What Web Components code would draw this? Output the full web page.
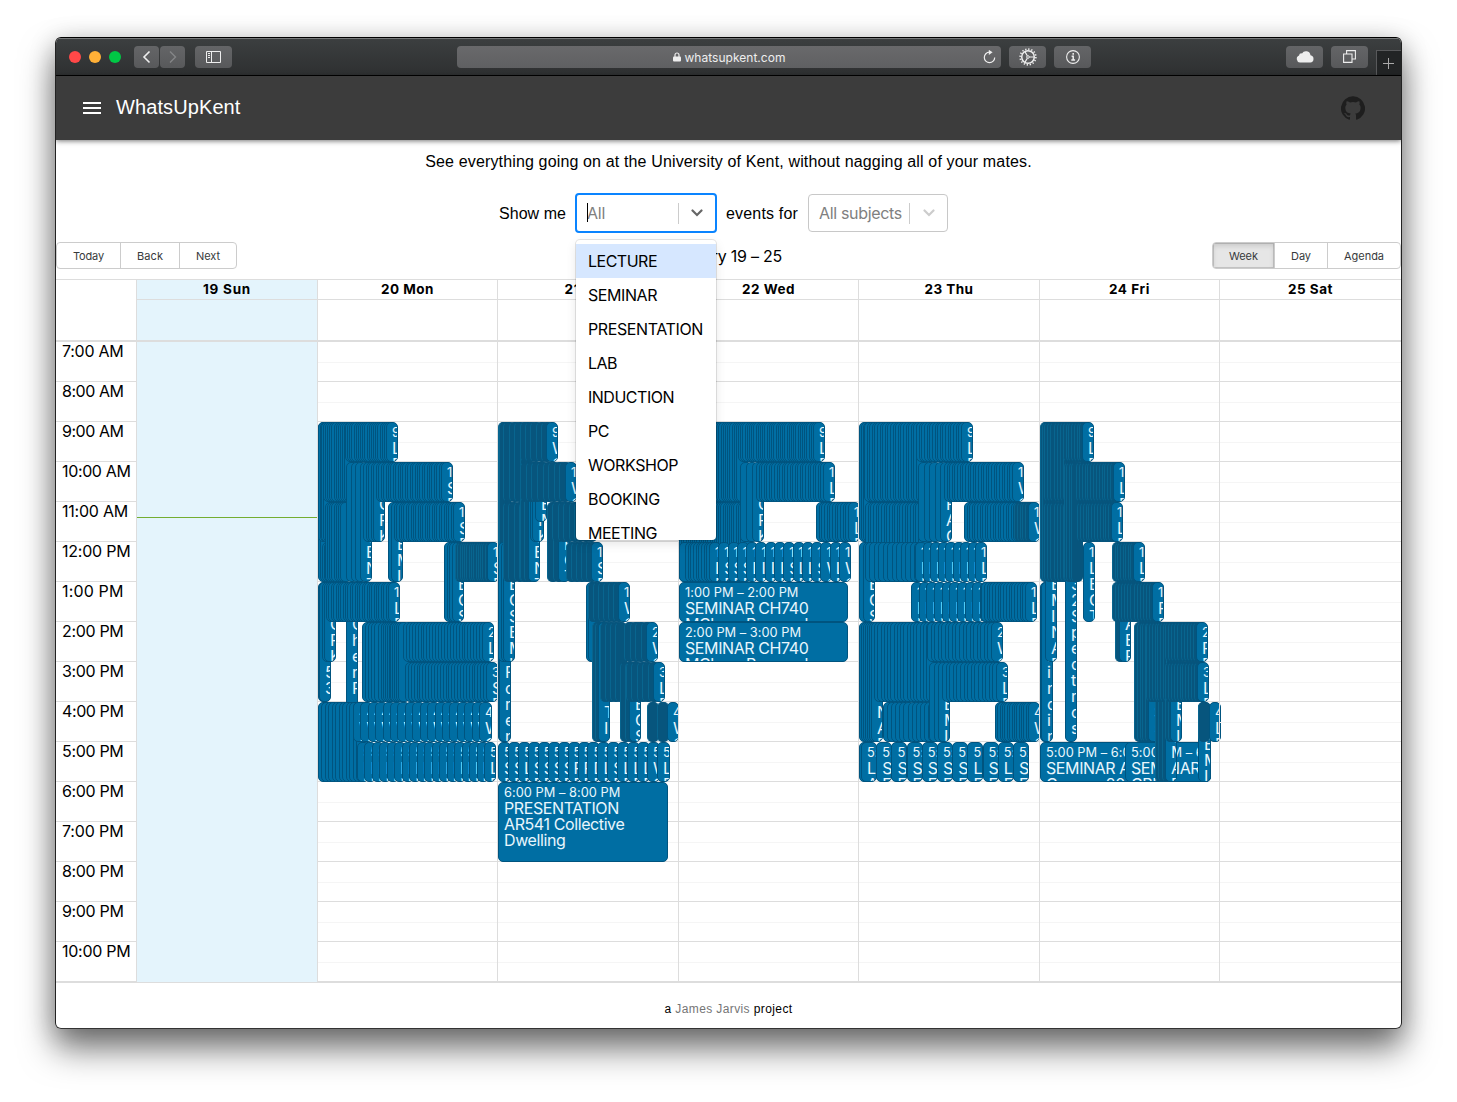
<!DOCTYPE html>
<html lang="en">
<head>
<meta charset="utf-8">
<title>WhatsUpKent</title>
<style>
html,body{margin:0;height:100%;background:#fff;overflow:hidden}
body{font-family:Inter,"Liberation Sans",sans-serif;font-size:16px;color:#000}
</style>
</head>
<body>
<browser-window>
  <browser-toolbar slot="chrome"></browser-toolbar>
  <app-bar></app-bar>
  <filter-panel></filter-panel>
  <week-calendar></week-calendar>
  <page-footer></page-footer>
</browser-window>
<script>
const define = (name, html, setup) => customElements.define(name, class extends HTMLElement {
  connectedCallback() {
    if (this.shadowRoot) return;
    this.attachShadow({ mode: 'open' }).innerHTML = html;
    if (setup) setup(this, this.shadowRoot);
  }
});

define('browser-window', `<style>
:host{display:block;box-sizing:border-box;width:1457px;height:1102px;padding:37px 55px 73px 55px;overflow:hidden}
.win{box-sizing:border-box;width:1347px;height:992px;border:1px solid #000;border-color:#000 #222 #333;border-radius:6px;background:#fff;display:flex;flex-direction:column;overflow:hidden}
.shade{width:1347px;border-radius:6px;box-shadow:0 20px 34px rgba(0,0,0,.52),0 4px 26px rgba(0,0,0,.22)}
</style><div class="shade"><div class="win"><slot name="chrome"></slot><slot></slot></div></div>`);

define('tool-button', `<style>
:host{display:flex;align-items:center;justify-content:center;box-sizing:border-box;height:22px;width:37px;border-radius:4px;background:linear-gradient(#646567,#58595b);color:#eee;flex:none}
</style><slot></slot>`);

define('browser-toolbar', `<style>
:host{display:flex;flex:none;box-sizing:border-box;height:38px;border-bottom:1px solid #000;background:linear-gradient(#3c3f40,#2e3031);box-shadow:inset 0 1px #77797a;align-items:center;padding-left:13px;font:12px Inter,sans-serif;color:#eee}
i{width:12px;height:12px;border-radius:50%;margin-right:8px}
.nav{width:25px;margin-right:1px}
.url{width:544px;height:22px;margin-left:225px;border-radius:4px;background:linear-gradient(#69696b,#5f6062);display:flex;align-items:center;justify-content:flex-end;gap:3px;box-sizing:border-box;padding-right:5px}
.addr{flex:1;display:flex;justify-content:center;align-items:center;gap:4px;padding:1px 0 0 22px}
.plus{margin-left:8px;width:25px;height:25px;box-sizing:border-box;border:solid #58595b;border-width:1px 0 0 1px;background:#222425;align-self:flex-end;display:flex;align-items:center;justify-content:center}
svg{display:block;fill:none;stroke:currentColor}
</style>
<i style="background:#ff4848"></i><i style="background:#ffb037"></i><i style="background:#00c845;margin-right:13px"></i>
<tool-button class="nav"><svg width="9" height="14" viewBox="0 0 9 14" stroke-width="1.6"><path d="M7.500 1.500L2 7L7.500 12.500"/></svg></tool-button>
<tool-button class="nav" style="color:#858688"><svg width="9" height="14" viewBox="0 0 9 14" stroke-width="1.4"><path d="M2 1.500L7.500 7L2 12.500"/></svg></tool-button>
<tool-button style="margin-left:9px"><svg width="15" height="12" viewBox="0 0 15 12"><path d="M.5.5h14v11H.5zM5.500.5v11M2 2.500h2M2 4.500h2M2 6.500h2"/></svg></tool-button>
<div class="url"><div class="addr"><svg width="8" height="10" viewBox="0 0 8 10"><path d="M2 5V3a2 2 0 014 0v2" stroke-width="1.2"/><rect y="4.400" width="8" height="5.200" rx="1" fill="currentColor" stroke="none"/></svg><fit-text w="101">whatsupkent.com</fit-text></div>
<svg width="14" height="14" viewBox="0 0 14 14" stroke-width="1.2"><path d="M8.500 2.200H7.500a5.200 5.200 0 105.200 5.200"/><path d="M6.800-.2L10.600 2.300L6.800 5z" fill="currentColor" stroke="none"/></svg></div>
<tool-button style="margin-left:8px"><svg width="18" height="18" viewBox="-9 -9 18 18"><circle r="6.300" stroke-width="1.500"/><circle r="7.900" stroke-width="1.600" stroke-dasharray="1.300 1.800"/><circle r="1.300" stroke-width="1"/><path d="M1.300 0H6M-.7 1.200L-3.100 5.400M-.7-1.200L-3.100-5.400" stroke-width="1.200"/></svg></tool-button>
<tool-button style="margin-left:8px"><svg width="14" height="14" viewBox="0 0 14 14"><circle cx="7" cy="7" r="6.400" stroke-width="1.100"/><path d="M7.200 3v1.800M5.600 6.300h1.600v3.800M5.300 10.100h3.800" stroke-width="1.500"/></svg></tool-button>
<tool-button style="margin-left:195px"><svg width="18" height="13" viewBox="0 0 18 13"><path d="M4 12.500A3.600 3.600 0 013 5.600A2.600 2.600 0 016 3.400A4.600 4.600 0 0114.500 5.200A3.700 3.700 0 0114.300 12.500z" fill="currentColor" stroke="none"/></svg></tool-button>
<tool-button style="margin-left:8px"><svg width="13" height="13" viewBox="0 0 13 13" stroke-width="1.1"><path d="M.6 4h8.400v8.400H.6zM3.600 4V.6h8.800v8.400H9"/></svg></tool-button>
<div class="plus"><svg width="11" height="11" viewBox="0 0 11 11" style="color:#aaa;margin-right:1px"><path d="M0 5.500h11M5.500 0v11"/></svg></div>`);

define('app-bar', `<style>
:host{display:flex;flex:none;align-items:center;box-sizing:border-box;height:64px;background:#3c3c3c;color:#fff;padding:0 36px 0 27px;box-shadow:0 1px 5px rgba(0,0,0,.55);position:relative;font:20px "Liberation Sans",Arial,sans-serif}
svg{display:block}.title{flex:1;padding:0 0 2px 15px}
.gh{fill:#1e1e1e}
</style>
<svg width="18" height="12" viewBox="0 0 18 12"><path d="M0 0h18v2H0zM0 5h18v2H0zM0 10h18v2H0z" fill="#fff"/></svg>
<div class="title"><fit-text w="124.500">WhatsUpKent</fit-text></div>
<svg class="gh" width="24" height="24" viewBox="0 0 24 24"><path d="M12 .3a12 12 0 0 0-3.800 23.400c.6.100.8-.3.8-.6v-2c-3.300.7-4-1.600-4-1.600-.6-1.400-1.400-1.800-1.400-1.800-1-.7.100-.7.100-.7 1.200 0 1.900 1.200 1.900 1.200 1 1.800 2.800 1.300 3.500 1 0-.8.400-1.300.7-1.600-2.700-.3-5.500-1.300-5.500-6 0-1.200.5-2.300 1.300-3.100-.2-.4-.6-1.600 0-3.200 0 0 1-.3 3.400 1.200a11.500 11.500 0 0 1 6 0c2.300-1.500 3.300-1.200 3.300-1.200.6 1.600.2 2.800 0 3.200.9.800 1.300 1.900 1.300 3.200 0 4.600-2.800 5.600-5.500 5.900.5.400.9 1 .9 2.200v3.300c0 .3.100.7.800.6A12 12 0 0 0 12 .3"/></svg>`);

define('select-box', `<style>
:host{display:flex;align-items:center;box-sizing:border-box;width:140px;height:38px;border:1px solid #c8c8c8;border-radius:4px;color:#808080;position:relative;font-family:Inter,sans-serif;background:#fff}
:host([open]){width:142px;height:40px;border:2px solid #0a84ff;}
.v{flex:1;padding-left:10px;white-space:nowrap}
.caret{position:absolute;left:10px;top:8px;height:19px;width:1px;background:#000}
.sep{width:1px;height:21px;background:#ccc}
.c{width:37px;display:flex;justify-content:center;color:#ccc}
:host([open]) .c{width:36px;color:#666}
svg{fill:none;stroke:currentColor;stroke-width:2.200;stroke-linecap:round}
.caret{display:none}:host([open]) .caret{display:block}
</style><div class="v"><slot></slot></div><div class="caret"></div><div class="sep"></div><div class="c"><svg width="12" height="8" viewBox="0 0 12 8"><path d="M1.500 1.500l4.500 4.500 4.500-4.500"/></svg></div><slot name="menu"></slot>`);

define('option-menu', `<style>
:host{position:absolute;left:-1px;top:45px;z-index:20;width:140px;height:300px;box-sizing:border-box;padding-top:4px;background:#fff;border-radius:4px;box-shadow:0 0 0 1px rgba(0,0,0,.1),0 4px 11px rgba(0,0,0,.1);overflow:hidden;color:#000}
</style><slot></slot>`);

define('menu-option', `<style>
:host{display:flex;align-items:center;height:34px;padding-left:12px;white-space:nowrap}
:host([active]){background:#d6e7ff}
</style><slot></slot>`);

define('filter-panel', `<style>
:host{display:flex;flex-direction:column;align-items:center;flex:none;height:102px;font-family:"Liberation Sans",Arial,sans-serif}
p{margin:12px 0 0;height:19px;line-height:20px}
.row{display:flex;align-items:center;height:40px;margin-top:22px;margin-left:-15px}
.t{padding-top:1px}
</style><p><fit-text w="606.500">See everything going on at the University of Kent, without nagging all of your mates.</fit-text></p>
<div class="row"><fit-text class="t" w="67" style="margin:0 9px 0 5px">Show me</fit-text>
<select-box open><fit-text w="18">All</fit-text>
<option-menu slot="menu">
<menu-option active><fit-text w="69">LECTURE</fit-text></menu-option><menu-option><fit-text w="69">SEMINAR</fit-text></menu-option><menu-option><fit-text w="115">PRESENTATION</fit-text></menu-option><menu-option><fit-text w="29">LAB</fit-text></menu-option><menu-option><fit-text w="86">INDUCTION</fit-text></menu-option><menu-option><fit-text w="21">PC</fit-text></menu-option><menu-option><fit-text w="90">WORKSHOP</fit-text></menu-option><menu-option><fit-text w="72">BOOKING</fit-text></menu-option><menu-option><fit-text w="69">MEETING</fit-text></menu-option>
</option-menu></select-box>
<fit-text class="t" w="72" style="margin:0 10px 0 9px">events for</fit-text>
<select-box><fit-text w="83">All subjects</fit-text></select-box></div>`);

define('button-group', `<style>
:host{display:flex;box-sizing:border-box;height:27px;border:1px solid #ccc;border-radius:4px;overflow:hidden;font-size:11px;color:#373a3c}
::slotted(*){display:flex;align-items:center;justify-content:center;border-left:1px solid #ccc;box-sizing:border-box}
::slotted(:first-child){border-left:0}
::slotted(.on){background:#e6e6e6;box-shadow:inset 0 3px 5px rgba(0,0,0,.125),inset 0 0 0 1px #c4c4c4}
</style><slot></slot>`);

// Event tuples: [first left, right, start hour, end hour, step, dark, title, last width]
const DAYS = [
 [], 
 [ [318,332,9,13,3,0,''],[318,335,9,12,2,0,''],[323,356,9,11,2.200,0,''],[345,398,9,10,2.200,0,'LECTURE'],
   [322,336,12,13,2.200,0,''],[325,352,11,13,2.200,0,''],[346,372,10,13,5,0,'PRESENTATION'],[363,385,10,12,2.500,0,'WORKSHOP'],
   [376,453,10,11,2.400,0,'SEMINAR'],[388,403,11,13,3,0,'SEMINAR'],[394,465,11,12,2.400,0,'SEMINAR'],
   [444,464,12,14,2.600,0,'LECSEM'],[455,498,12,13,2.300,1,'SEMINAR',11],
   [318,331,13,16,1.500,0,'CCCO53'],[322,336,13,15,2,0,'WORKSHOP'],[346,358,13,17,9,0,'LCherP'],[326,400,13,14,2.400,0,'LECTURE'],
   [362,405,14,16,3,0,''],[381,410,14,16,2,0,''],[403,494,14,15,2.900,0,'LECTURE'],[405,498,15,16,2.900,0,'SEMINAR'],
   [318,368,16,18,3.500,0,''],[353,492,16,17,7.400,0,'WORKSHOP',13],[357,496,17,18,7.450,0,'LECTURE'] ],
 [ [498,511,9,13,2,1,''],[498,511,13,17,2,0,'LAB1Forensic'],[503,532,9,11,5.500,1,''],[520,558,9,10,5.500,1,'WORKSHOP'],
   [502,515,12,13,2,1,''],[498,515,12,15,2.200,0,'LECSEMINAR'],[503,531,11,13,5,1,''],[520,540,10,13,4,1,'PRESENTATION'],
   [530,544,10,12,3,0,'WORKSHOP'],[535,547,10,11.500,3,0,'SEMINAR'],[520,577,10,11,5.500,1,'WORKSHOP'],
   [547,570,11,13,5,1,'LECTURE'],[552,597,11,12,6,1,''],[566,603,12,13,5,1,'SEMINAR'],
   [586,600,13,15,3,0,''],[588,630,13,14,5.200,1,'WORKSHOP'],[592,610,14,17,3,1,'SEMTTI'],[600,627,14,16,5,1,''],[624,658,14,15,5,1,'WORKSHOP'],
   [620,641,15,17,4,1,'LECSEM'],[626,665,15,16,5.200,1,'LECTURE'],[647,679,16,17,9,1,'WORKSHOP'],
   [498,670,17,18,10.060,0,'S,S,L,S,S,S,S,P,P,D,L,S,L,L,L,W,L',13],
   ['wide',498,668,18,20,'PRESENTATION AR541 Collective Dwelling','6:00 PM – 8:00 PM'] ],
 [ [679,748,9,11,2.200,0,''],[738,825,9,10,2.200,0,'LECTURE'],[679,752,11,13,2.200,0,''],[740,764,10,12,6,0,'WORKSHOP'],[756,835,10,11,2.600,0,'LECTURE'],
   [816,860,11,12,2.600,0,'LECTURE'],[679,690,12,13,8,0,''],[685,721,12,13,2.600,0,''],[709,851,12,13,9.300,0,'L,S,S,S,L,I,L,L,S,L,L,S,W,L,W',12],
   ['wide',679,848,13,14,'SEMINAR CH740 MChem Research','1:00 PM – 2:00 PM'],['wide',679,848,14,15,'SEMINAR CH740 MChem Research','2:00 PM – 3:00 PM'] ],
 [ [859,875,9,12,2,0,''],[864,928,9,11,2.600,0,''],[916,973,9,10,2.600,0,'LECTURE'],[865,930,11,13,2.600,0,''],[918,952,10,12,5,0,'BFACT'],
   [944,1024,10,11,2.600,0,'WORKSHOP'],[964,1028,11,12,2.600,0,''],[1014,1040,11,12,2.600,1,'WORKSHOP'],
   [859,875,12,14,4,0,'LECSEM'],[865,926,12,13,4.600,0,''],[915,987,12,13,7.400,0,'LECTURE'],
   [911,992,13,14,7.500,0,'LECTURE'],[981,1037,13,14,2.700,0,'LECTURE'],
   [859,883,14,17,2,0,'SEMINAR'],[874,938,14,16,3.200,0,''],[927,1003,14,15,3.600,0,'WORKSHOP'],[883,940,16,17,4.200,0,''],
   [929,950,15,17,6,0,'SEMINAR'],[942,1008,15,16,3.600,0,'LECTURE'],[995,1040,16,17,2.400,0,'WORKSHOP'],
   [859,872,17,18,9,0,''],[861,1029,17,18,15.250,0,'LA,S,S,S,S,S,S,L,S,L,S',16] ],
 [ [1040,1054,9,13,2,1,''],[1044,1075,9,11,3,1,''],[1063,1094,9,10,2.800,1,'LECTURE'],[1040,1053,13,17,2,0,'PRINincin'],
   [1045,1056,12,15,9,0,'SEMINAR'],[1044,1075,11,13,3,1,''],[1065,1077,12,17,9,0,'532Spectroscopy'],[1064,1083,10,13,2.500,1,''],
   [1077,1123,11,12,2.800,1,'LECTURE'],[1076,1125,10,11,2.800,1,'LECTURE'],[1083,1095,12,14,12,0,'LECTURE'],
   [1115,1131,13,15,4,1,'LABR'],[1112,1145,12,13,2.800,1,'LECTURE'],[1112,1164,13,14,3,1,'PRESENTATION'],
   ['wide',1040,1211,17,18,'SEMINAR ARTS Comms 20 Media','5:00 PM – 6:00 PM'],['wide',1125,1211,17,18,'SEMINAR CRIT','5:00 PM – 6:00 PM'],
   [1134,1160,14,17,3,1,'LABMS52'],[1155,1177,15,18,3,1,'LABSMAR'],[1146,1178,14,16,3,1,''],[1165,1208,14,15,3,1,'PRESENTATION'],
   [1165,1182,15,17,3,1,'SEMINAR'],[1165,1209,15,16,3,1,'LECTURE'],[1198,1211,16,18,3,1,'SEMINAR'],[1198,1221,16,17,11,1,'LECTURE'] ],
 []
];
const EDGES = [136,317,497,678,858,1039,1219,1400];

define('calendar-event', `<style>
:host{position:absolute;display:block;box-sizing:border-box;overflow:hidden;background:#006ea3;border:1px solid #00547f;border-radius:5px;padding:2px 5px;color:#e8f6fd}
:host([dark]){background:#07557d;border-color:#07557d;border-left-color:#08658f}
.l{font-size:12.800px;line-height:16px;height:15px;white-space:nowrap;letter-spacing:.03px}
.t{font-size:16px;line-height:16px;word-break:break-all;letter-spacing:-.4px}
:host([wide]) .t{word-break:normal}
</style><div class="l"></div><div class="t"></div>`, (el, r) => {
  r.querySelector('.l').textContent = el.getAttribute('label') || '';
  r.querySelector('.t').textContent = el.getAttribute('title-text') || '';
});

define('day-column', `<style>
:host{display:block;position:relative;box-sizing:border-box;border-left:1px solid #ddd;flex:none;height:640px}
:host([today]){background:#e4f4fc}
.h{height:40px;box-sizing:border-box;border-bottom:1px solid #ddd;display:flex;flex-direction:column;justify-content:center}
.h::before{content:"";border-top:1px solid #f5f5f5;margin-top:1px}
:host([today]) .h{border-color:transparent}:host([today]) .h::before{border-color:transparent}
.now{position:absolute;left:0;right:0;top:175px;height:1px;background:#74ad31}
</style>`, (el, r) => {
  const i = +el.getAttribute('day'), base = EDGES[i] + 1;
  for (let k = 0; k < 16; k++) r.appendChild(Object.assign(document.createElement('div'), { className: 'h' }));
  if (i === 0) r.appendChild(Object.assign(document.createElement('div'), { className: 'now' }));
  const add = (x, x2, a, b, title, label, dark, wide) => {
    const e = document.createElement('calendar-event');
    e.style.cssText = `left:${x - base}px;width:${x2 - x}px;top:${(a - 7) * 40}px;height:${(b - a) * 40}px`;
    if (title) { e.setAttribute('title-text', title); e.setAttribute('label', label); }
    if (dark) e.setAttribute('dark', '');
    if (wide) e.setAttribute('wide', '');
    r.appendChild(e);
  };
  const names = { L: 'LECTURE', S: 'SEMINAR', P: 'PRESENTATION', D: 'DROP', W: 'WORKSHOP', I: 'INDUCTION', LA: 'LAB' };
  for (const d of DAYS[i]) {
    if (d[0] === 'wide') { add(d[1], d[2], d[3], d[4], d[5], d[6], 0, 1); continue; }
    const [x, right, a, b, step, dark, text, w = 12] = d;
    const list = text.includes(',') ? text.split(',') : null;
    const n = Math.max(1, Math.round((right - w - x) / step) + 1);
    const real = n > 1 ? (right - w - x) / (n - 1) : 0;
    const label = ((a + 11) % 12 + 1 | 0) + ':00';
    for (let k = 0; k < n; k++) {
      const last = k === n - 1;
      const t = list ? names[list[k]] : (last || (step > 7 && !dark)) ? text : '';
      const left = n === 1 ? x : x + real * k;
      add(left, n === 1 ? right : left + w, a, b, t, label, dark && !(last && text), 0);
    }
  }
});

define('week-calendar', `<style>
:host{display:block;flex:none;font-family:Inter,sans-serif}
.bar{display:flex;height:27px;justify-content:space-between;align-items:center;padding-left:0}
.grid{margin-top:10px;border-top:1px solid #ddd;border-bottom:1px solid #ddd;height:704px;box-sizing:border-box}
.head{display:flex;height:62px;box-sizing:border-box;border-bottom:2px solid #ddd}
.head div{box-sizing:border-box;border-left:1px solid #ddd}
.head b{display:flex;justify-content:center;align-items:center;height:20px;padding-bottom:2px;box-sizing:border-box;border-bottom:1px solid #ddd;font-size:13.500px}
.body{display:flex;height:640px}
.g{width:80px;flex:none}
.g div{height:40px;box-sizing:border-box;border-bottom:1px solid #ddd;padding-left:6px;line-height:19px;white-space:nowrap}
</style>
<div class="bar"><button-group><span style="width:63px"><fit-text w="31">Today</fit-text></span><span style="width:59px"><fit-text w="26">Back</fit-text></span><span style="width:57px"><fit-text w="24">Next</fit-text></span></button-group>
<fit-text w="115">January 19 – 25</fit-text>
<button-group><span class="on" style="width:61px"><fit-text w="29">Week</fit-text></span><span style="width:53px"><fit-text w="20">Day</fit-text></span><span style="width:73px"><fit-text w="40">Agenda</fit-text></span></button-group></div>
<div class="grid"><div class="head"><span class="g"></span></div><div class="body"><div class="g"></div></div></div>`, (el, r) => {
  const head = r.querySelector('.head'), body = r.querySelector('.body'), g = body.querySelector('.g');
  ['19 Sun','20 Mon','21 Tue','22 Wed','23 Thu','24 Fri','25 Sat'].forEach((n, i) => {
    const w = EDGES[i + 1] - EDGES[i] + (i === 6 ? 1 : 0);
    const tw = [48, 53, 47, 53, 49, 41, 45][i];
    head.insertAdjacentHTML('beforeend', `<div style="width:${w}px${i ? '' : ';background:#e4f4fc'}"><b><fit-text w="${tw}">${n}</fit-text></b></div>`);
    body.insertAdjacentHTML('beforeend', `<day-column day="${i}" ${i ? '' : 'today'} style="width:${w}px"></day-column>`);
  });
  for (let h = 7; h < 23; h++) {
    const s = `${(h + 11) % 12 + 1}:00 ${h < 12 ? 'AM' : 'PM'}`;
    const w = h === 11 ? 66 : h === 12 || h === 22 || h === 10 ? 68.500 : 61.500;
    g.insertAdjacentHTML('beforeend', `<div><fit-text w="${w}">${s}</fit-text></div>`);
  }
});

define('page-footer', `<style>
:host{display:flex;justify-content:center;flex:none;padding-top:17px;font:12px/18px "Liberation Sans",Arial,sans-serif}
span{color:#757575}
</style><fit-text w="128">a <span>James Jarvis</span> project</fit-text>`);

// Spreads its text over the advance width given in the "w" attribute.
define('fit-text', `<style>:host{display:inline-block;white-space:nowrap}</style><slot></slot>`, el => {
  const natural = el.getBoundingClientRect().width, n = el.textContent.length;
  if (natural) { el.style.letterSpacing = ((+el.getAttribute('w') - natural) / n).toFixed(3) + 'px'; }
});
</script>
</body>
</html>
